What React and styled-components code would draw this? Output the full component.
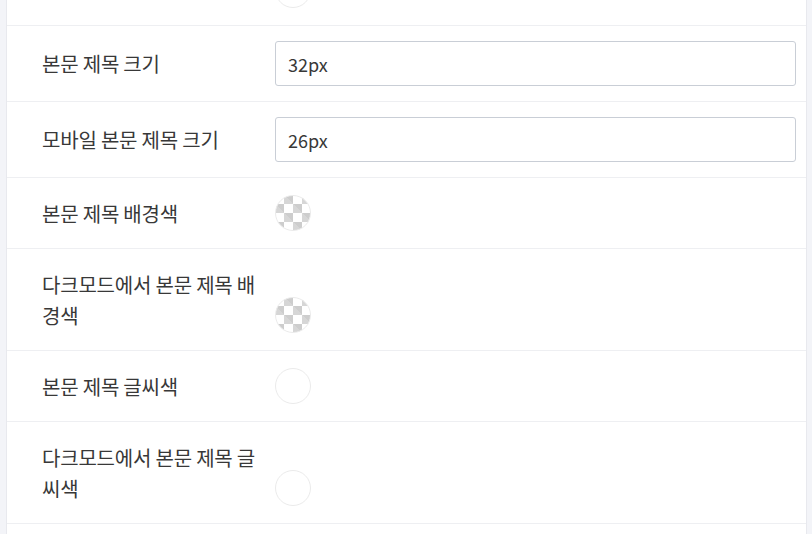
import React from "react";
import styled, { createGlobalStyle } from "styled-components";

const GlobalStyle = createGlobalStyle`
  * {
    box-sizing: border-box;
  }

  html,
  body {
    margin: 0;
    padding: 0;
    background: #f3f4f8;
    overflow: hidden;
  }

  body {
    font-family: "Noto Sans CJK KR", "Noto Sans", sans-serif;
    color: #333;
  }
`;

// first row is scrolled mostly out of view, only its swatch edge shows
const rows = [
  { label: "", type: "color", value: "#ffffff" },
  { label: "본문 제목 크기", type: "input", value: "32px" },
  { label: "모바일 본문 제목 크기", type: "input", value: "26px" },
  { label: "본문 제목 배경색", type: "color", value: "transparent" },
  { label: "다크모드에서 본문 제목 배경색", type: "color", value: "transparent" },
  { label: "본문 제목 글씨색", type: "color", value: "#ffffff" },
  { label: "다크모드에서 본문 제목 글씨색", type: "color", value: "#ffffff" },
];

const App = () => {
  return (
    <>
      <GlobalStyle />
      <Page>
        <Panel>
          {rows.map((row, i) => (
            <Row key={i}>
              <Label>{row.label}</Label>
              {row.type === "input" ? (
                <TextInput defaultValue={row.value} />
              ) : (
                <Swatch $transparent={row.value === "transparent"} />
              )}
            </Row>
          ))}
        </Panel>
      </Page>
    </>
  );
};

const Page = styled.div`
  width: 100%;
  height: 534px;
  padding: 0 5px 0 6px;
  overflow: hidden;
`;

const Panel = styled.div`
  margin-top: -45px;
  min-height: 600px;
  background: #fff;
  border-left: 1px solid #e8e9ee;
  border-right: 1px solid #e8e9ee;
`;

const Row = styled.div`
  display: flex;
  flex-direction: row;
  align-items: flex-end;
  padding: 15px 10px 15px 35px;
  border-bottom: 1px solid #eeeff2;
`;

const Label = styled.div`
  width: 233px;
  min-height: 40px;
  flex-shrink: 0;
  align-self: center;
  padding: 4.5px 15px 4.5px 0;
  font-size: 20px;
  line-height: 31px;
  letter-spacing: -0.2px;
  color: #383838;
`;

const TextInput = styled.input`
  flex: 1;
  min-width: 0;
  height: 45px;
  padding: 0 12px;
  border: 1px solid #c9ced6;
  border-radius: 3px;
  font-family: "Noto Sans CJK KR", "Noto Sans", sans-serif;
  font-size: 18px;
  color: #383838;
  outline: none;
`;

const Swatch = styled.div`
  width: 36px;
  height: 36px;
  margin: 2px 0;
  border-radius: 50%;
  border: 1px solid #ebebeb;
  background: ${(p) =>
    p.$transparent
      ? "linear-gradient(45deg, rgba(255,255,255,0.18) 50%, transparent 50%) -1px -1px / 9px 9px, conic-gradient(#cdcdcd 25%, #fff 0 50%, #cdcdcd 0 75%, #fff 0) -1px -1px / 18px 18px"
      : "#fff"};
`;

export default App;
